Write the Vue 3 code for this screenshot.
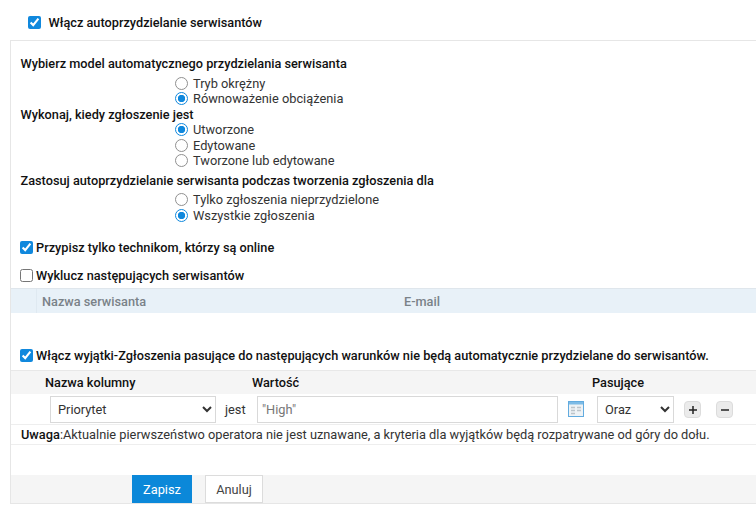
<script setup>
const groups = [
  { title: 'Wybierz model automatycznego przydzielania serwisanta', name: 'model', cls: 'first', options: [['Tryb okrężny', false], ['Równoważenie obciążenia', true]] },
  { title: 'Wykonaj, kiedy zgłoszenie jest', name: 'when', cls: 'second', options: [['Utworzone', true], ['Edytowane', false], ['Tworzone lub edytowane', false]] },
  { title: 'Zastosuj autoprzydzielanie serwisanta podczas tworzenia zgłoszenia dla', name: 'scope', cls: 'third', options: [['Tylko zgłoszenia nieprzydzielone', false], ['Wszystkie zgłoszenia', true]] }
]
</script>

<template>
  <div class="page">
    <label class="top-check">
      <input type="checkbox" checked />
      <span>Włącz autoprzydzielanie serwisantów</span>
    </label>
    <div class="panel">
      <section v-for="g in groups" :key="g.name" class="group" :class="g.cls">
        <h3>{{ g.title }}</h3>
        <label v-for="o in g.options" :key="o[0]" class="radio">
          <input type="radio" :name="g.name" :checked="o[1]" />
          <span>{{ o[0] }}</span>
        </label>
      </section>

      <label class="check online"><input type="checkbox" checked /><span>Przypisz tylko technikom, którzy są online</span></label>
      <label class="check exclude"><input type="checkbox" /><span>Wyklucz następujących serwisantów</span></label>

      <div class="tech-head">
        <div class="tech-spacer"></div>
        <div class="tech-name">Nazwa serwisanta</div>
        <div class="tech-mail">E-mail</div>
      </div>

      <label class="check exceptions"><input type="checkbox" checked /><span>Włącz wyjątki-Zgłoszenia pasujące do następujących warunków nie będą automatycznie przydzielane do serwisantów.</span></label>

      <div class="rule-head">
        <div class="h-col">Nazwa kolumny</div>
        <div class="h-val">Wartość</div>
        <div class="h-match">Pasujące</div>
      </div>
      <div class="rule-row">
        <select class="sel sel-col"><option>Priorytet</option></select>
        <span class="is">jest</span>
        <input class="val" type="text" value="&quot;High&quot;" />
        <svg class="cal" width="16" height="16" viewBox="0 0 16 16" aria-hidden="true">
          <rect x="0.5" y="0.5" width="15" height="15" fill="#eef2f5" stroke="#62abdf" />
          <rect x="1" y="1" width="14" height="2.5" fill="#7dbbe6" />
          <path d="M3 6.5h4M9 6.5h4M3 9.5h4M9 9.5h4M3 12.5h4" stroke="#bcc4ca" stroke-width="1.5" fill="none" />
        </svg>
        <select class="sel sel-match"><option>Oraz</option></select>
        <button class="mini plus" type="button" aria-label="Dodaj">
          <svg width="14" height="14" viewBox="0 0 14 14" aria-hidden="true"><path d="M3 7h8M7 3v8" stroke="#222" stroke-width="1.5" fill="none" /></svg>
        </button>
        <button class="mini minus" type="button" aria-label="Usuń">
          <svg width="14" height="14" viewBox="0 0 14 14" aria-hidden="true"><path d="M3 7h8" stroke="#222" stroke-width="1.5" fill="none" /></svg>
        </button>
      </div>
      <div class="note"><b>Uwaga</b>:Aktualnie pierwszeństwo operatora nie jest uznawane, a kryteria dla wyjątków będą rozpatrywane od góry do dołu.</div>

      <div class="footer">
        <button class="btn save" type="button">Zapisz</button>
        <button class="btn cancel" type="button">Anuluj</button>
      </div>
    </div>
  </div>
</template>

<style>
html, body { margin: 0; background: #fff; overflow: hidden; }
</style>

<style scoped>
.page {
  width: 756px;
  height: 516px;
  overflow: hidden;
  font-family: Roboto, "Liberation Sans", sans-serif;
  font-size: 12.8px;
  color: #333;
  background: #fff;
  box-sizing: border-box;
  padding-top: 14px;
}
input[type="checkbox"] {
  margin: 0;
  accent-color: #1088dd;
  flex: none;
  width: 13px;
  height: 13px;
}
input[type="radio"] {
  appearance: none;
  margin: 0;
  flex: none;
  width: 13px;
  height: 13px;
  box-sizing: border-box;
  border: 1px solid #909090;
  border-radius: 50%;
  background: #fff;
}
input[type="radio"]:checked {
  border: 1.5px solid #1088dd;
  background: radial-gradient(circle, #1088dd 0 3.4px, #fff 4px);
}
.top-check {
  display: flex;
  align-items: center;
  gap: 7.5px;
  height: 16px;
  margin-left: 28px;
  font-size: 12.74px;
  font-weight: 500;
  color: #111;
}
.panel {
  margin: 10px 0 0 10px;
  border-top: 1px solid #e6e6e6;
  border-left: 1px solid #e6e6e6;
  border-bottom: 1px solid #e6e6e6;
  height: 464px;
  box-sizing: border-box;
  padding-top: 15px;
}
.group h3 {
  margin: 0 0 0 9.5px;
  font-size: 12.74px;
  line-height: 15.5px;
  font-weight: 500;
  color: #111;
}
.group.first h3 { margin-bottom: 4px; }
.group.third { margin-top: 4px; }
.group.third h3 { margin-bottom: 4px; }
.radio {
  display: flex;
  align-items: center;
  gap: 5px;
  height: 15.5px;
  margin-left: 164px;
}
.check {
  display: flex;
  align-items: center;
  gap: 3px;
  margin-left: 9px;
  height: 16px;
  font-size: 12.74px;
  font-weight: 500;
  color: #111;
}
.online { margin-top: 16px; }
.exclude { margin-top: 12px; }
.tech-head {
  display: flex;
  height: 25px;
  margin-top: 5px;
  background: #e8f1f8;
  border-top: 1px solid #dfe6ec;
  box-sizing: border-box;
  align-items: stretch;
  color: #7a8288;
  font-size: 12.74px;
  font-weight: 500;
  line-height: 26px;
}
.tech-spacer { width: 25px; border-right: 1px solid #dfe9f1; }
.tech-name { width: 367px; padding-left: 5px; box-sizing: border-box; }
.exceptions { margin-top: 34px; }
.rule-head {
  display: flex;
  height: 24px;
  margin-top: 7px;
  background: #f5f5f5;
  border-top: 1px solid #e8e8e8;
  box-sizing: border-box;
  font-size: 12.74px;
  font-weight: 500;
  color: #111;
  line-height: 24px;
}
.h-col { width: 241px; padding-left: 34px; box-sizing: border-box; }
.h-val { width: 340px; }
.rule-row {
  display: flex;
  align-items: center;
  height: 31px;
  border-bottom: 1px solid #eee;
  box-sizing: border-box;
  padding-left: 39px;
}
.sel, .val {
  height: 27px;
  box-sizing: border-box;
  border: 1px solid #d9d9d9;
  background-color: #fff;
  font: inherit;
  color: #333;
  border-radius: 0;
  outline: none;
}
.sel { padding-left: 3px; }
.sel-col { width: 166px; }
.is { margin-left: 9px; width: 32px; }
.val { width: 301px; padding: 0 4px; color: #777; }
.cal { margin-left: 10px; }
.sel-match { width: 77px; margin-left: 13px; }
.mini {
  display: flex;
  align-items: center;
  justify-content: center;
  width: 17px;
  height: 17px;
  padding: 0;
  border: 1px solid #dcdcdc;
  border-radius: 4px;
  background: #ebebeb;
  margin-top: 1px;
}
.plus { margin-left: 10px; }
.minus { margin-left: 15px; }
.note {
  height: 20px;
  line-height: 20px;
  border-bottom: 1px solid #eee;
  padding-left: 10px;
  box-sizing: border-box;
}
.note b { font-weight: 500; color: #111; }
.footer {
  display: flex;
  height: 28px;
  margin-top: 30px;
  background: #f5f5f5;
  padding-left: 121px;
  box-sizing: border-box;
}
.btn {
  font: inherit;
  height: 28px;
  padding: 0;
  border-radius: 0;
  box-sizing: border-box;
}
.save { width: 60px; background: #0b88d9; color: #fff; border: 1px solid #0b88d9; }
.cancel { width: 58px; margin-left: 13px; background: #fff; color: #444; border: 1px solid #dcdcdc; }
</style>
